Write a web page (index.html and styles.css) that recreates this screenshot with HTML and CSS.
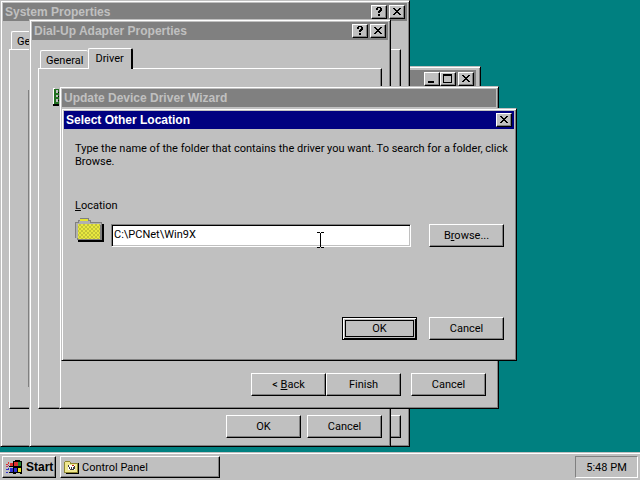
FILE: index.html
```html
<!DOCTYPE html>
<html lang="en">
<head>
  <meta charset="UTF-8">
  <meta name="viewport" content="width=device-width, initial-scale=1.0">
  <title>Desktop</title>
  <link rel="stylesheet" href="styles.css">
</head>
<body>
  <svg class="symbols" aria-hidden="true">
    <symbol id="close" viewBox="0 0 12 10"><path d="M2 1h2v1h1v1h2v-1h1v-1h2v1h-1v1h-1v1h-1v1h1v1h1v1h1v1h-2v-1h-1v-1h-2v1h-1v1h-2v-1h1v-1h1v-1h1v-1h-1v-1h-1v-1h-1z"/></symbol>
    <symbol id="help" viewBox="0 0 12 10"><path d="M4 0h4v1h1v3h-1v1h-1v1h-2v-2h1v-1h1v-2h-2v2h-2v-2h1zM5 7h2v2h-2z"/></symbol>
    <symbol id="minimize" viewBox="0 0 12 10"><path d="M2 7h6v2h-6z"/></symbol>
    <symbol id="maximize" viewBox="0 0 12 10"><path fill-rule="evenodd" d="M1 0h9v9h-9zM2 2v6h7v-6z"/></symbol>
  </svg>

  <main class="desktop">
    <!-- Control Panel -->
    <section class="window control-panel">
      <header class="title-bar inactive">
        <span class="title"></span>
        <button class="title-btn" aria-label="Minimize"><svg><use href="#minimize"/></svg></button>
        <button class="title-btn" aria-label="Maximize"><svg><use href="#maximize"/></svg></button>
        <button class="title-btn close-btn" aria-label="Close"><svg><use href="#close"/></svg></button>
      </header>
    </section>

    <!-- System Properties -->
    <section class="window system">
      <header class="title-bar inactive">
        <span class="title">System Properties</span>
        <button class="title-btn" aria-label="Help"><svg><use href="#help"/></svg></button>
        <button class="title-btn close-btn" aria-label="Close"><svg><use href="#close"/></svg></button>
      </header>
      <div class="sheet-body">
        <div class="tabs"><button class="tab">General</button></div>
        <div class="sheet"><div class="device-list"></div></div>
        <div class="buttons"><button class="btn" aria-label="Cancel"></button></div>
      </div>
    </section>

    <!-- Dial-Up Adapter Properties -->
    <section class="window adapter">
      <header class="title-bar inactive">
        <span class="title">Dial-Up Adapter Properties</span>
        <button class="title-btn" aria-label="Help"><svg><use href="#help"/></svg></button>
        <button class="title-btn close-btn" aria-label="Close"><svg><use href="#close"/></svg></button>
      </header>
      <div class="sheet-body">
        <div class="tabs">
          <button class="tab">General</button>
          <button class="tab selected">Driver</button>
        </div>
        <div class="sheet">
          <svg class="card-icon" viewBox="0 0 20 18" width="20" height="18">
            <path fill="#fff" d="M0 0h2v16h-2z"/>
            <path fill="#207020" d="M1 1h19v15h-19z"/>
            <path fill="#c0c0c0" d="M3 2h2v3h-2zM3 7h2v2h-2zM3 11h2v3h-2z"/>
            <path d="M0 16h20v2h-20zM5 4h2v1h-2zM5 8h2v1h-2zM5 12h2v1h-2z"/>
          </svg>
        </div>
        <div class="buttons">
          <button class="btn">OK</button>
          <button class="btn">Cancel</button>
        </div>
      </div>
    </section>

    <!-- Update Device Driver Wizard -->
    <section class="window wizard">
      <header class="title-bar inactive">
        <span class="title">Update Device Driver Wizard</span>
      </header>
      <div class="buttons wizard-buttons">
        <div class="nav">
          <button class="btn">&lt; <u>B</u>ack</button>
          <button class="btn">Finish</button>
        </div>
        <button class="btn">Cancel</button>
      </div>
    </section>

    <!-- Select Other Location -->
    <section class="window location">
      <header class="title-bar">
        <span class="title">Select Other Location</span>
        <button class="title-btn" aria-label="Close"><svg><use href="#close"/></svg></button>
      </header>
      <form class="location-form">
        <p>Type the name of the folder that contains the driver you want. To search for a folder, click Browse.</p>
        <label for="path"><u>L</u>ocation</label>
        <div class="path-row">
          <svg class="folder" viewBox="0 0 30 27" width="30" height="27" shape-rendering="crispEdges">
            <defs>
              <pattern id="dither" width="4" height="4" patternUnits="userSpaceOnUse">
                <path fill="#e8e840" d="M0 0h4v4h-4z"/>
                <path fill="#c4c438" d="M0 0h2v2h-2zM2 2h2v2h-2z"/>
              </pattern>
            </defs>
            <path d="M3 8h26v18h-26z"/>
            <path fill="#808080" d="M0 6h3v-2h2v-2h9v2h2v2h11v18h-25v-2h-2z"/>
            <path fill="#b0b0b0" d="M1 7h3v-2h2v-2h7v2h2v2h11v2h-23v13h-2z"/>
            <path fill="#e4e430" d="M5 3h8v2h-8z"/>
            <path fill="url(#dither)" d="M3 8h22v15h-22z"/>
          </svg>
          <div class="path-field">
            <input type="text" id="path" value="C:\PCNet\Win9X">
            <svg class="cursor" viewBox="0 0 7 16" width="7" height="16"><path d="M0 0h3v1h1v-1h3v1h-3v14h3v1h-3v-1h-1v1h-3v-1h3v-14h-3z"/></svg>
          </div>
          <button type="button" class="btn">B<u>r</u>owse...</button>
        </div>
        <div class="buttons">
          <button type="button" class="btn default"><span>OK</span></button>
          <button type="button" class="btn">Cancel</button>
        </div>
      </form>
    </section>
  </main>

  <footer class="taskbar">
    <button class="task start">
      <svg viewBox="0 0 17 15" width="17" height="15" shape-rendering="crispEdges">
        <path d="M7 1h2v-1h5v1h2v13h-2v-1h-4v1h-3z"/>
        <path fill="#e03030" d="M8 2h4v4h-4zM4 3h3v3h-3zM2 2h1v2h-1zM0 4h2v1h-2z"/>
        <path fill="#208030" d="M12 2h3v4h-3z"/>
        <path fill="#3030d0" d="M8 8h3v4h-3zM4 8h3v4h-3zM2 8h1v2h-1zM0 9h2v1h-2zM0 12h2v1h-2z"/>
        <path fill="#e8e020" d="M12 8h3v4h-3z"/>
        <path fill="#c03060" d="M2 5h1v1h-1zM0 6h2v1h-2z"/>
        <path d="M3 6h4v1h-4zM3 12h4v1h-4z"/>
      </svg>
      Start
    </button>
    <button class="task program">
      <svg viewBox="0 0 15 14" width="15" height="14" shape-rendering="crispEdges">
        <path d="M2 3h13v11h-13z"/>
        <path fill="#908830" d="M0 2h1v-1h5v1h1v1h7v10h-14z"/>
        <path fill="#f0e890" d="M1 2h5v2h7v8h-12z"/>
        <path fill="#fff" d="M4 5h7v5h-7z"/>
        <path fill="#404040" d="M4 5h1v2h1v2h1v-2h1v2h1v-2h1v-1h1v3h-1v1h-4v-1h-1v-2h-1z"/>
        <path fill="#c02020" d="M8 5h2v1h-2z"/>
      </svg>
      Control Panel
    </button>
    <time class="clock">5:48 PM</time>
  </footer>
</body>
</html>
```

FILE: styles.css
```css
* {
  box-sizing: border-box;
}
body {
  display: flex;
  flex-direction: column;
  height: 100vh;
  margin: 0;
  overflow: hidden;
  background: #008080;
  font: 11px/13px Roboto, Arial, sans-serif;
  color: #000;
}
button, input {
  font: inherit;
  color: inherit;
}
.symbols {
  position: absolute;
  width: 0;
  height: 0;
}
.desktop {
  position: relative;
  flex: 1;
}

/* windows */
.window {
  position: absolute;
  display: flex;
  flex-direction: column;
  padding: 1px;
  background: #c0c0c0;
  border: 1px solid;
  border-color: #c0c0c0 #000 #000 #c0c0c0;
  box-shadow: inset 1px 1px #fff, inset -1px -1px #808080;
}
.title-bar {
  display: flex;
  align-items: center;
  flex: none;
  height: 18px;
  margin: 1px;
  padding: 0 2px;
  background: #000080;
  color: #fff;
  font: bold 12px/14px "Liberation Sans", Arial, sans-serif;
}
.inactive {
  background: #808080;
  color: #c0c0c0;
}
.title {
  flex: 1;
  white-space: nowrap;
}
.title-btn {
  width: 16px;
  height: 14px;
  padding: 1px;
  background: #c0c0c0;
  border: 1px solid;
  border-color: #fff #000 #000 #fff;
  box-shadow: inset -1px -1px #808080;
}
.title-btn svg {
  display: block;
  width: 12px;
  height: 10px;
  fill: #000;
}
.close-btn {
  margin-left: 2px;
}
.control-panel {
  left: 200px;
  top: 66px;
  width: 281px;
  height: 200px;
  padding: 2px 3px;
}
.system {
  left: 0;
  top: 0;
  width: 410px;
  height: 447px;
}
.adapter {
  left: 29px;
  top: 19px;
  width: 362px;
  height: 428px;
}
.wizard {
  left: 59px;
  top: 86px;
  width: 440px;
  height: 323px;
}
.location {
  left: 61px;
  top: 108px;
  width: 456px;
  height: 253px;
}

/* property sheets */
.sheet-body {
  display: flex;
  flex-direction: column;
  flex: 1;
  padding: 7px;
}
.tabs {
  display: flex;
  align-items: flex-end;
  height: 20px;
  padding-left: 2px;
}
.tab {
  height: 18px;
  padding: 1px 5px 0;
  background: #c0c0c0;
  border: 1px solid #fff;
  border-right: 0;
  border-bottom: 0;
  border-radius: 2px 2px 0 0;
}
.tab.selected {
  z-index: 1;
  height: 21px;
  margin-bottom: -1px;
  padding: 0 7px 2px 6px;
  border-right: 2px solid #000;
}
.sheet {
  flex: 1;
  padding: 19px 14px;
  border: 1px solid;
  border-color: #fff #000 #000 #fff;
  box-shadow: inset -1px -1px #808080;
}
.system .sheet {
  padding: 40px 18px 20px;
}
.device-list {
  height: 100%;
  border: 1px solid #808080;
  border-bottom-color: #fff;
}
.buttons {
  display: flex;
  justify-content: flex-end;
  gap: 6px;
  margin-top: 6px;
}
.btn {
  width: 75px;
  height: 23px;
  padding: 0;
  background: #c0c0c0;
  border: 1px solid;
  border-color: #fff #000 #000 #fff;
  box-shadow: inset -1px -1px #808080;
}
.wizard-buttons {
  gap: 10px;
  margin: auto 11px 11px;
}
.nav {
  display: flex;
}

/* location dialog */
.location-form {
  display: flex;
  flex-direction: column;
  flex: 1;
  padding: 12px 11px 19px 12px;
}
.location-form p {
  margin: 0 -11px 31px 0;
}
.path-row {
  display: flex;
  gap: 18px;
  align-items: flex-end;
  margin-top: 4px;
}
.folder {
  margin: 0 -12px 4px 0;
}
.path-field {
  position: relative;
  flex: 1;
}
.path-field input {
  display: block;
  width: 100%;
  height: 23px;
  padding: 0 2px 2px;
  background: #fff;
  border: 1px solid;
  border-color: #808080 #fff #fff #808080;
  box-shadow: inset 1px 1px #000, inset -1px -1px #c0c0c0;
}
.cursor {
  position: absolute;
  left: 206px;
  top: 8px;
}
.location-form .buttons {
  gap: 12px;
  margin-top: auto;
}
.default {
  padding: 2px;
  border-color: #000;
  box-shadow: inset 1px 1px #fff, inset -1px -1px #000;
}
.default span {
  display: block;
  height: 17px;
  border: 1px solid #000;
  line-height: 15px;
}

/* taskbar */
.taskbar {
  display: flex;
  gap: 4px;
  align-items: flex-start;
  height: 28px;
  padding: 4px 2px 0;
  background: #c0c0c0;
  box-shadow: inset 0 1px #c0c0c0, inset 0 2px #fff;
}
.task {
  display: flex;
  align-items: center;
  gap: 3px;
  height: 22px;
  padding: 0 3px;
  background: #c0c0c0;
  border: 1px solid;
  border-color: #fff #000 #000 #fff;
  box-shadow: inset -1px -1px #808080;
  white-space: nowrap;
}
.start {
  width: 54px;
  font: bold 12px/14px "Liberation Sans", Arial, sans-serif;
}
.start svg {
  flex: none;
}
.program {
  width: 160px;
}
.clock {
  width: 63px;
  margin-left: auto;
  padding: 4px 0 3px;
  border: 1px solid;
  border-color: #808080 #fff #fff #808080;
  text-align: center;
}
```
